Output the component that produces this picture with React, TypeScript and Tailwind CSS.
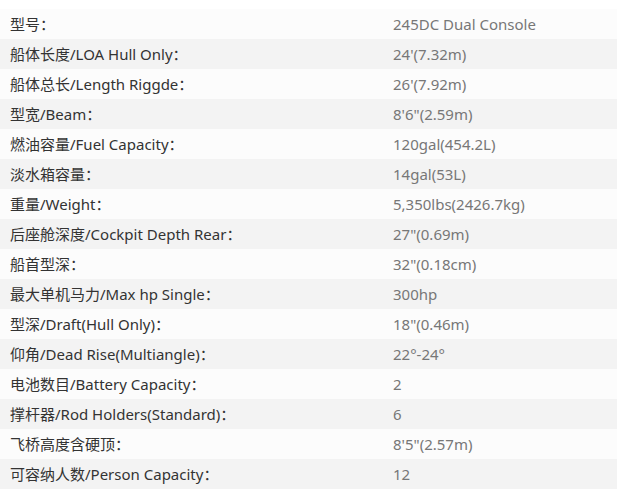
const specs: [string, string][] = [
  ["型号：", "245DC Dual Console"],
  ["船体长度/LOA Hull Only：", "24'(7.32m)"],
  ["船体总长/Length Riggde：", "26'(7.92m)"],
  ["型宽/Beam：", "8'6\"(2.59m)"],
  ["燃油容量/Fuel Capacity：", "120gal(454.2L)"],
  ["淡水箱容量：", "14gal(53L)"],
  ["重量/Weight：", "5,350lbs(2426.7kg)"],
  ["后座舱深度/Cockpit Depth Rear：", "27\"(0.69m)"],
  ["船首型深：", "32\"(0.18cm)"],
  ["最大单机马力/Max hp Single：", "300hp"],
  ["型深/Draft(Hull Only)：", "18\"(0.46m)"],
  ["仰角/Dead Rise(Multiangle)：", "22°-24°"],
  ["电池数目/Battery Capacity：", "2"],
  ["撑杆器/Rod Holders(Standard)：", "6"],
  ["飞桥高度含硬顶：", "8'5\"(2.57m)"],
  ["可容纳人数/Person Capacity：", "12"],
];

export default function App() {
  return (
    <div className="w-[618px] h-[496px] bg-white pt-[9px] font-['Noto_Sans','Noto_Sans_CJK_SC',sans-serif] text-[15px]">
      <div className="w-[617px]">
        {specs.map(([label, value], i) => (
          <div
            key={i}
            className={`flex h-[30px] items-center ${i % 2 === 0 ? "bg-[#fcfcfc]" : "bg-[#f3f3f3]"}`}
          >
            <div className="w-[393px] pl-[10px] text-[#333333]">{label}</div>
            <div className="flex-1 text-[#777777]">{value}</div>
          </div>
        ))}
      </div>
    </div>
  );
}
